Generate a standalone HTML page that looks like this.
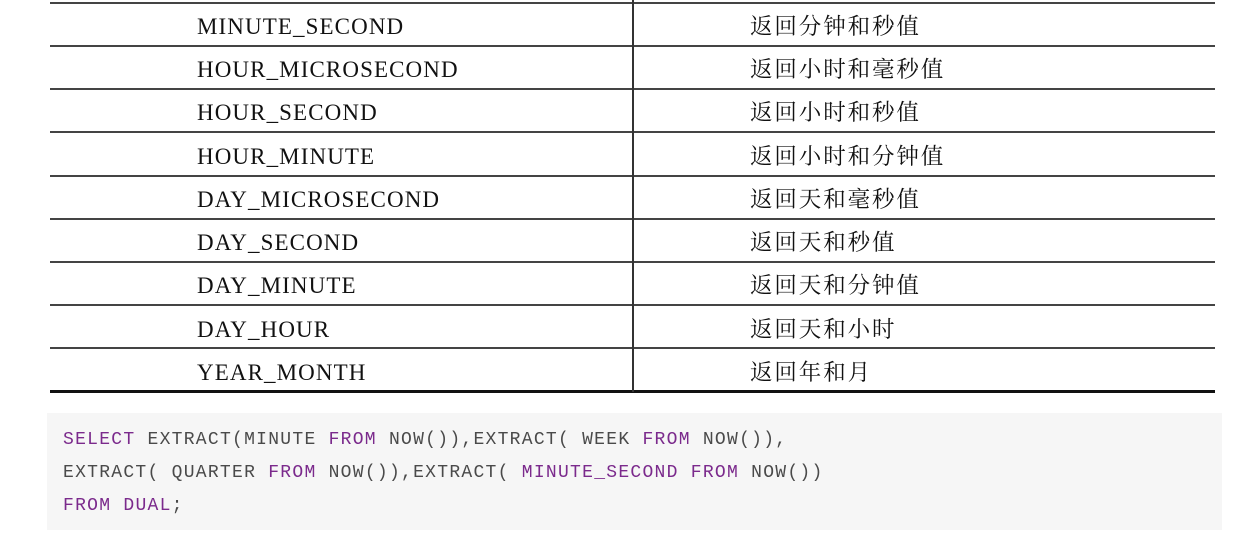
<!DOCTYPE html>
<html><head><meta charset="utf-8"><style>
body{margin:0;width:1247px;height:549px;background:#fff;position:relative;overflow:hidden;font-family:"Liberation Serif","Noto Serif CJK SC",serif;}
.h{position:absolute;left:50px;width:1165px;height:2px;background:#444;}
.v{position:absolute;left:632px;top:0;width:1.5px;height:392px;background:#333;}
.l{position:absolute;left:197px;font-size:23px;letter-spacing:1.1px;color:#111;line-height:26px;}
.r{position:absolute;left:750px;font-size:22.5px;letter-spacing:1.9px;color:#111;line-height:26px;font-family:"Noto Serif CJK SC",serif;}
.code{position:absolute;left:47px;top:413px;width:1175px;height:117px;background:#f6f6f6;}
.ln{position:absolute;left:63px;font-family:"Liberation Mono",monospace;font-size:18px;letter-spacing:1.27px;color:#4a4a4a;white-space:pre;}
.k{color:#7b2a8c;}
</style></head><body>
<div class="h" style="top:2px"></div>
<div class="h" style="top:45px"></div>
<div class="h" style="top:88px"></div>
<div class="h" style="top:131px"></div>
<div class="h" style="top:175px"></div>
<div class="h" style="top:218px"></div>
<div class="h" style="top:261px"></div>
<div class="h" style="top:304px"></div>
<div class="h" style="top:347px"></div>
<div class="h" style="top:390px;height:3px;background:#111"></div>
<div class="v"></div>
<div class="l" style="top:14px">MINUTE_SECOND</div><div class="r" style="top:12px">返回分钟和秒值</div>
<div class="l" style="top:57px">HOUR_MICROSECOND</div><div class="r" style="top:55px">返回小时和毫秒值</div>
<div class="l" style="top:100px">HOUR_SECOND</div><div class="r" style="top:98px">返回小时和秒值</div>
<div class="l" style="top:144px">HOUR_MINUTE</div><div class="r" style="top:142px">返回小时和分钟值</div>
<div class="l" style="top:187px">DAY_MICROSECOND</div><div class="r" style="top:185px">返回天和毫秒值</div>
<div class="l" style="top:230px">DAY_SECOND</div><div class="r" style="top:228px">返回天和秒值</div>
<div class="l" style="top:273px">DAY_MINUTE</div><div class="r" style="top:271px">返回天和分钟值</div>
<div class="l" style="top:317px">DAY_HOUR</div><div class="r" style="top:315px">返回天和小时</div>
<div class="l" style="top:360px">YEAR_MONTH</div><div class="r" style="top:358px">返回年和月</div>
<div class="code"></div>
<div class="ln" style="top:430px"><span class="k">SELECT</span> EXTRACT(MINUTE <span class="k">FROM</span> NOW()),EXTRACT( WEEK <span class="k">FROM</span> NOW()),</div>
<div class="ln" style="top:463px">EXTRACT( QUARTER <span class="k">FROM</span> NOW()),EXTRACT( <span class="k">MINUTE_SECOND</span> <span class="k">FROM</span> NOW())</div>
<div class="ln" style="top:496px"><span class="k">FROM</span> <span class="k">DUAL</span>;</div>
</body></html>
